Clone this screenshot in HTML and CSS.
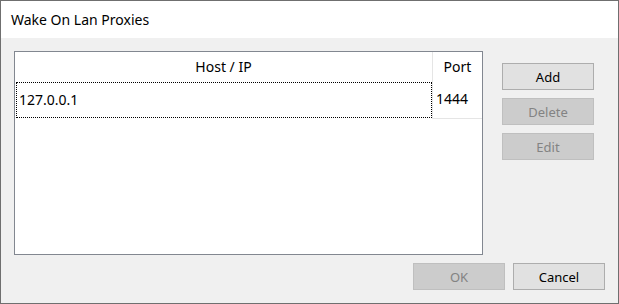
FILE: index.html
```html
<!DOCTYPE html>
<html>
<head>
<meta charset="utf-8">
<link rel="stylesheet" href="styles.css">
</head>
<body>
<div class="window">
  <div class="titlebar">Wake On Lan Proxies</div>
  <div class="main">
    <div class="list">
      <div class="hcell host">Host / IP</div>
      <div class="hcell port">Port</div>
      <div class="cell host"><span class="focus">127.0.0.1</span></div>
      <div class="cell port">1444</div>
    </div>
    <div class="side">
      <button class="btn">Add</button>
      <button class="btn" disabled>Delete</button>
      <button class="btn" disabled>Edit</button>
    </div>
  </div>
  <div class="footer">
    <button class="btn" disabled>OK</button>
    <button class="btn">Cancel</button>
  </div>
</div>
</body>
</html>
```
FILE: styles.css
```css
html, body {
  margin: 0;
  padding: 0;
  background: #f0f0f0;
}
.window {
  box-sizing: border-box;
  width: 619px;
  height: 304px;
  border: 1px solid #6f6f6f;
  background: #f0f0f0;
  display: flex;
  flex-direction: column;
  font-family: "Noto Sans", "Liberation Sans", sans-serif;
  color: #000;
}
.titlebar {
  height: 37px;
  background: #fff;
  padding-left: 10px;
  display: flex;
  align-items: center;
  font-size: 14px;
  line-height: 20px;
}
.main {
  display: flex;
  padding: 13px 13px 0 13px;
}
.list {
  box-sizing: border-box;
  width: 469px;
  height: 204px;
  border: 1px solid #828790;
  background: #fff;
  display: grid;
  grid-template-columns: 417px 50px;
  grid-template-rows: 30px 37px;
  align-content: start;
  font-size: 14px;
  line-height: 18px;
}
.hcell {
  display: flex;
  align-items: center;
  justify-content: center;
}
.hcell.port, .cell.port {
  border-left: 1px solid #e5e5e5;
}
.cell.port {
  border-bottom: 1px solid #e5e5e5;
  display: flex;
  align-items: center;
  padding-left: 3px;
  padding-bottom: 2px;
}
.cell.host {
  padding: 0 0 1px 1px;
  display: flex;
}
.focus {
  flex: 1;
  border: 1px dotted #000;
  display: flex;
  align-items: center;
  padding-left: 2px;
  padding-bottom: 1px;
}
.side {
  margin-left: 19px;
  margin-top: 12px;
  display: flex;
  flex-direction: column;
  gap: 8px;
}
.btn {
  box-sizing: border-box;
  width: 92px;
  height: 27px;
  background: #e1e1e1;
  border: 1px solid #adadad;
  font-family: "Noto Sans", "Liberation Sans", sans-serif;
  font-size: 13px;
  color: #000;
  padding: 0;
  margin: 0;
}
.btn:disabled {
  background: #cccccc;
  border-color: #bfbfbf;
  color: #838383;
}
.footer {
  display: flex;
  justify-content: flex-end;
  gap: 8px;
  padding: 8px 13px 0 0;
}
```
